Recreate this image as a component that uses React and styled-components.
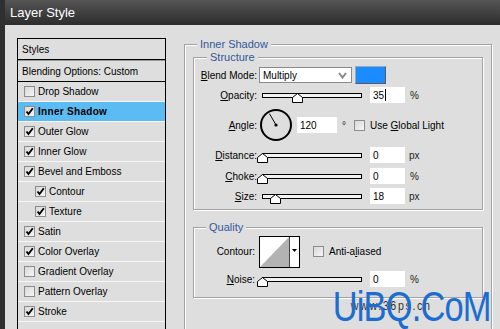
import React from "react";
import styled, { createGlobalStyle } from "styled-components";

const GlobalStyle = createGlobalStyle`
  html, body {
    margin: 0;
    padding: 0;
    background: #dedede;
  }
  body {
    font-family: "Liberation Sans", Arial, sans-serif;
  }
`;

const Window = styled.div`
  position: relative;
  width: 495px;
  height: 329px;
  overflow: hidden;
  border-left: 5px solid #2f2f2f;
  background: #dedede;
  display: flex;
  flex-direction: column;
`;

const TitleBar = styled.div`
  height: 25px;
  flex: none;
  display: flex;
  align-items: center;
  padding-left: 5px;
  background: linear-gradient(#555555, #2c2c2c);
  color: #ffffff;
  font-size: 13px;
`;

const Body = styled.div`
  display: flex;
  align-items: flex-start;
  padding: 13px 0 0 12px;
`;

const StylesList = styled.div`
  width: 147px;
  flex: none;
  border: 1px solid #000;
  border-bottom: none;
  display: flex;
  flex-direction: column;
  font-size: 10px;
  color: #000;
`;

const HeaderRow = styled.div`
  height: 20px;
  display: flex;
  align-items: center;
  padding-left: 4px;
  border-bottom: 1px solid #000;
  box-shadow: ${(p) => (p.$double ? "0 1px 0 #9a9a9a" : "none")};
  margin-bottom: ${(p) => (p.$double ? "1px" : "0")};
`;

const StyleRow = styled.div`
  height: 19px;
  display: flex;
  align-items: center;
  gap: 3px;
  padding-left: ${(p) => (p.$sub ? "17px" : "6px")};
  border-bottom: 1px solid #f6f6f6;
  background: ${(p) => (p.$active ? "#5bbcf4" : "transparent")};
  font-weight: ${(p) => (p.$active ? "bold" : "normal")};
  letter-spacing: ${(p) => (p.$active ? "0.3px" : "0")};
`;

const Box = styled.span`
  width: 9px;
  height: 9px;
  flex: none;
  border: 1px solid #8c8c8c;
  background: linear-gradient(135deg, #d8d8d8, #f6f6f6);
  display: inline-flex;
  align-items: center;
  justify-content: center;
`;

const Pane = styled.fieldset`
  width: 290px;
  margin: 0 0 0 18px;
  padding: 0 8px 0 8px;
  border: 1px solid #a2a2a2;
  box-shadow: 1px 1px 0 #ffffff, inset 1px 1px 0 #ffffff;
  height: 400px;
`;

const Group = styled.fieldset`
  margin: ${(p) => p.$mt || "0"} 0 0 0;
  padding: ${(p) => p.$pt || "0"} 0 ${(p) => p.$pb || "3px"} 0;
  border: 1px solid #a2a2a2;
  box-shadow: 1px 1px 0 #ffffff, inset 1px 1px 0 #ffffff;
`;

const Legend = styled.legend`
  font-size: 11px;
  line-height: 13px;
  color: #34589a;
  padding: 0 3px;
  margin-left: ${(p) => p.$ml || "4px"};
  background: #dedede;
`;

const Row = styled.div`
  height: ${(p) => p.$h}px;
  display: flex;
  align-items: center;
  font-size: 10px;
  color: #000;
`;

const Label = styled.div`
  width: ${(p) => p.$w || 63}px;
  flex: none;
  text-align: right;
`;

const Select = styled.div`
  margin-left: 2px;
  height: 14px;
  background: #fff;
  border: 1px solid #8a8a8a;
  display: flex;
  align-items: center;
  justify-content: space-between;
  padding: 0 4px 0 3px;
  box-sizing: content-box;
  width: 84px;
`;

const Swatch = styled.div`
  margin-left: 3px;
  width: 29px;
  height: 16px;
  background: #1a8cff;
  border: 1px solid #5a5a5a;
  border-top-color: #9ab;
  border-left-color: #9ab;
`;

const SliderWrap = styled.div`
  position: relative;
  margin-left: ${(p) => p.$ml || 5}px;
  margin-top: 6px;
  width: 100px;
  height: 10px;
  flex: none;
`;

const Track = styled.div`
  height: 3px;
  border: 1px solid #000;
  background: #f2f2f2;
`;

const Thumb = styled.svg`
  position: absolute;
  top: 0;
`;

const Field = styled.div`
  margin-left: ${(p) => p.$ml || 8}px;
  width: ${(p) => p.$w || 35}px;
  height: 16px;
  background: #fff;
  display: flex;
  align-items: center;
  padding-left: 3px;
  box-sizing: border-box;
  flex: none;
`;

const Caret = styled.span`
  display: inline-block;
  width: 1px;
  height: 12px;
  background: #000;
  margin-left: 1px;
`;

const Unit = styled.span`
  margin-left: ${(p) => p.$ml || 5}px;
  color: #222;
`;

const CheckLabel = styled.div`
  display: flex;
  align-items: center;
  gap: 5px;
  margin-left: ${(p) => p.$ml}px;
`;

const Watermark = styled.div`
  position: absolute;
  right: 9px;
  bottom: 2px;
  font-size: 42px;
  line-height: 40px;
  color: #1b6dd1;
  letter-spacing: -1px;
  transform: scaleX(0.82);
  transform-origin: right center;
`;

const WatermarkSmall = styled.span`
  position: absolute;
  left: 22px;
  top: 12px;
  font-size: 13px;
  line-height: 13px;
  color: #333;
  letter-spacing: 2px;
  z-index: -1;
`;

const Check = () => (
  <svg width="9" height="9" viewBox="0 0 9 9">
    <path d="M1.5 4.5 L3.5 7 L7.8 1.2" fill="none" stroke="#000" strokeWidth="1.9" />
  </svg>
);

const CheckBox = ({ on }) => <Box>{on && <Check />}</Box>;

const Slider = ({ pos, ml }) => (
  <SliderWrap $ml={ml}>
    <Track />
    <Thumb width="11" height="10" viewBox="0 0 11 10" style={{ left: pos - 5 }}>
      <path d="M0.5 9.5 V4.5 L5.5 0.5 L10.5 4.5 V9.5 Z" fill="#fff" stroke="#000" />
    </Thumb>
  </SliderWrap>
);

const Dial = () => (
  <svg width="34" height="34" viewBox="0 0 34 34" style={{ marginLeft: 2 }}>
    <circle cx="17" cy="17" r="15" fill="none" stroke="#000" strokeWidth="2" />
    <line x1="17" y1="17" x2="10.5" y2="5.7" stroke="#000" strokeWidth="1" />
    <circle cx="17" cy="17" r="1.6" fill="#000" />
  </svg>
);

const ContourPreview = () => (
  <svg width="41" height="32" viewBox="0 0 41 32" style={{ marginLeft: 4 }}>
    <rect x="0.5" y="0.5" width="40" height="31" fill="#fff" stroke="#000" />
    <path d="M1 31 L30 1 V31 Z" fill="#b3b3b3" />
    <line x1="30.5" y1="1" x2="30.5" y2="31" stroke="#444" />
    <path d="M33 13 H38 L35.5 16 Z" fill="#000" />
  </svg>
);

const styles = [
  { name: "Drop Shadow", on: false },
  { name: "Inner Shadow", on: true, active: true },
  { name: "Outer Glow", on: true },
  { name: "Inner Glow", on: true },
  { name: "Bevel and Emboss", on: true },
  { name: "Contour", on: true, sub: true },
  { name: "Texture", on: true, sub: true },
  { name: "Satin", on: true },
  { name: "Color Overlay", on: true },
  { name: "Gradient Overlay", on: false },
  { name: "Pattern Overlay", on: false },
  { name: "Stroke", on: true },
];

export default function App() {
  return (
    <>
      <GlobalStyle />
      <Window>
        <TitleBar>Layer Style</TitleBar>
        <Body>
          <StylesList>
            <HeaderRow $double>Styles</HeaderRow>
            <HeaderRow>Blending Options: Custom</HeaderRow>
            {styles.map((s) => (
              <StyleRow key={s.name} $sub={s.sub} $active={s.active}>
                <CheckBox on={s.on} />
                {s.name}
              </StyleRow>
            ))}
            <StyleRow />
          </StylesList>

          <Pane>
            <Legend>Inner Shadow</Legend>
            <Group $pt="2px">
              <Legend $ml="13px">Structure</Legend>
              <Row $h={18}>
                <Label><u>B</u>lend Mode:</Label>
                <Select>
                  <span>Multiply</span>
                  <svg width="9" height="7" viewBox="0 0 9 7">
                    <path d="M1 1 L4.5 5.5 L8 1" fill="none" stroke="#888" strokeWidth="2" />
                  </svg>
                </Select>
                <Swatch />
              </Row>
              <Row $h={22}>
                <Label><u>O</u>pacity:</Label>
                <Slider pos={35} />
                <Field>35<Caret /></Field>
                <Unit>%</Unit>
              </Row>
              <Row $h={38}>
                <Label><u>A</u>ngle:</Label>
                <Dial />
                <Field $ml={4} $w={40}>120</Field>
                <Unit $ml={5}>°</Unit>
                <CheckLabel $ml={8}>
                  <CheckBox />
                  <span>Use <u>G</u>lobal Light</span>
                </CheckLabel>
              </Row>
              <Row $h={22}>
                <Label><u>D</u>istance:</Label>
                <Slider pos={0} />
                <Field>0</Field>
                <Unit $ml={4}>px</Unit>
              </Row>
              <Row $h={20}>
                <Label><u>C</u>hoke:</Label>
                <Slider pos={0} />
                <Field>0</Field>
                <Unit>%</Unit>
              </Row>
              <Row $h={20}>
                <Label><u>S</u>ize:</Label>
                <Slider pos={13} />
                <Field>18</Field>
                <Unit $ml={4}>px</Unit>
              </Row>
            </Group>

            <Group $mt="11px" $pb="8px">
              <Legend $ml="12px">Quality</Legend>
              <Row $h={35}>
                <Label $w={61}>Contour:</Label>
                <ContourPreview />
                <CheckLabel $ml={13}>
                  <CheckBox />
                  <span>Anti-a<u>l</u>iased</span>
                </CheckLabel>
              </Row>
              <Row $h={20}>
                <Label $w={61}><u>N</u>oise:</Label>
                <Slider pos={0} ml={7} />
                <Field>0</Field>
                <Unit>%</Unit>
              </Row>
            </Group>
          </Pane>
        </Body>
        <Watermark>
          <WatermarkSmall>www.36ps.cn</WatermarkSmall>
          UiBQ.CoM
        </Watermark>
      </Window>
    </>
  );
}
